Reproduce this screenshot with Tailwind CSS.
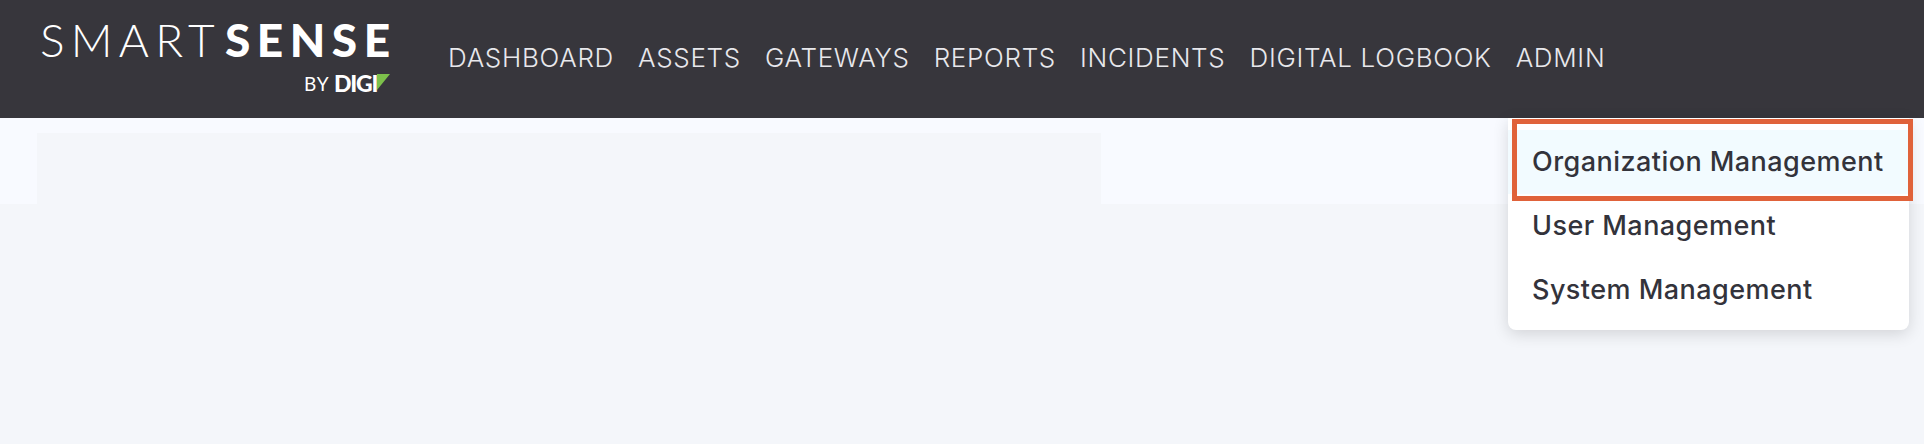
<!DOCTYPE html>
<html><head><meta charset="utf-8"><script src="https://cdn.jsdelivr.net/npm/@tailwindcss/browser@4"></script></head>
<body class="m-0 w-[1924px] h-[444px] overflow-hidden bg-[#f4f6fa] font-['Inter','Liberation_Sans',sans-serif]">
<div class="relative h-[444px]">
<header class="h-[118px] bg-[#37363c] flex items-start pl-[40px]">
  <div class="flex flex-col items-end w-[350px] text-white font-['Lato',sans-serif]">
    <div class="flex h-[46px] mt-[17px] items-center leading-none whitespace-nowrap">
      <span class="text-[46px] font-light tracking-[6.2px] w-[185px]">SMART</span>
      <span class="text-[46px] font-black tracking-[6.5px] w-[165px]">SENSE</span>
    </div>
    <div class="flex items-center mt-[10px] h-[20px] leading-none">
      <span class="text-[19px] tracking-[1px] w-[30px]">BY</span>
      <span class="text-[23px] font-black tracking-[-1.2px] w-[43px]">DIGI</span>
      <svg class="w-[13px] h-[16px] mb-[3px]" viewBox="0 0 13 16"><polygon points="0,0 13,0 0,16" fill="#7cc04b"/></svg>
    </div>
  </div>
  <nav class="flex gap-[24px] ml-[58px] mt-[44px] text-[#e8e8ec] text-[26px] font-light leading-[28px] tracking-[0.7px] whitespace-nowrap">
    <span>DASHBOARD</span><span>ASSETS</span><span>GATEWAYS</span><span>REPORTS</span><span>INCIDENTS</span><span>DIGITAL LOGBOOK</span><span>ADMIN</span>
  </nav>
</header>
<div class="h-[86px] bg-[#f8faff] pt-[15px] pl-[37px]">
  <div class="w-[1064px] h-[71px] bg-[#f4f6fa]"></div>
</div>
<div class="absolute left-[1508px] top-[118px] w-[401px] h-[212px] pt-[12px] bg-white rounded-b-[8px] shadow-[0_4px_16px_rgba(0,0,0,0.14)] text-[27px] font-medium text-[#33333b] whitespace-nowrap tracking-[0.45px]">
  <div class="h-[64px] flex items-center pl-[24px] bg-[#f2fbff]">Organization Management</div>
  <div class="h-[64px] flex items-center pl-[24px]">User Management</div>
  <div class="h-[64px] flex items-center pl-[24px]">System Management</div>
</div>
<div class="absolute left-[1512px] top-[119px] w-[401px] h-[82px] border-[5px] border-[#e0623a]"></div>
</div>
</body></html>
